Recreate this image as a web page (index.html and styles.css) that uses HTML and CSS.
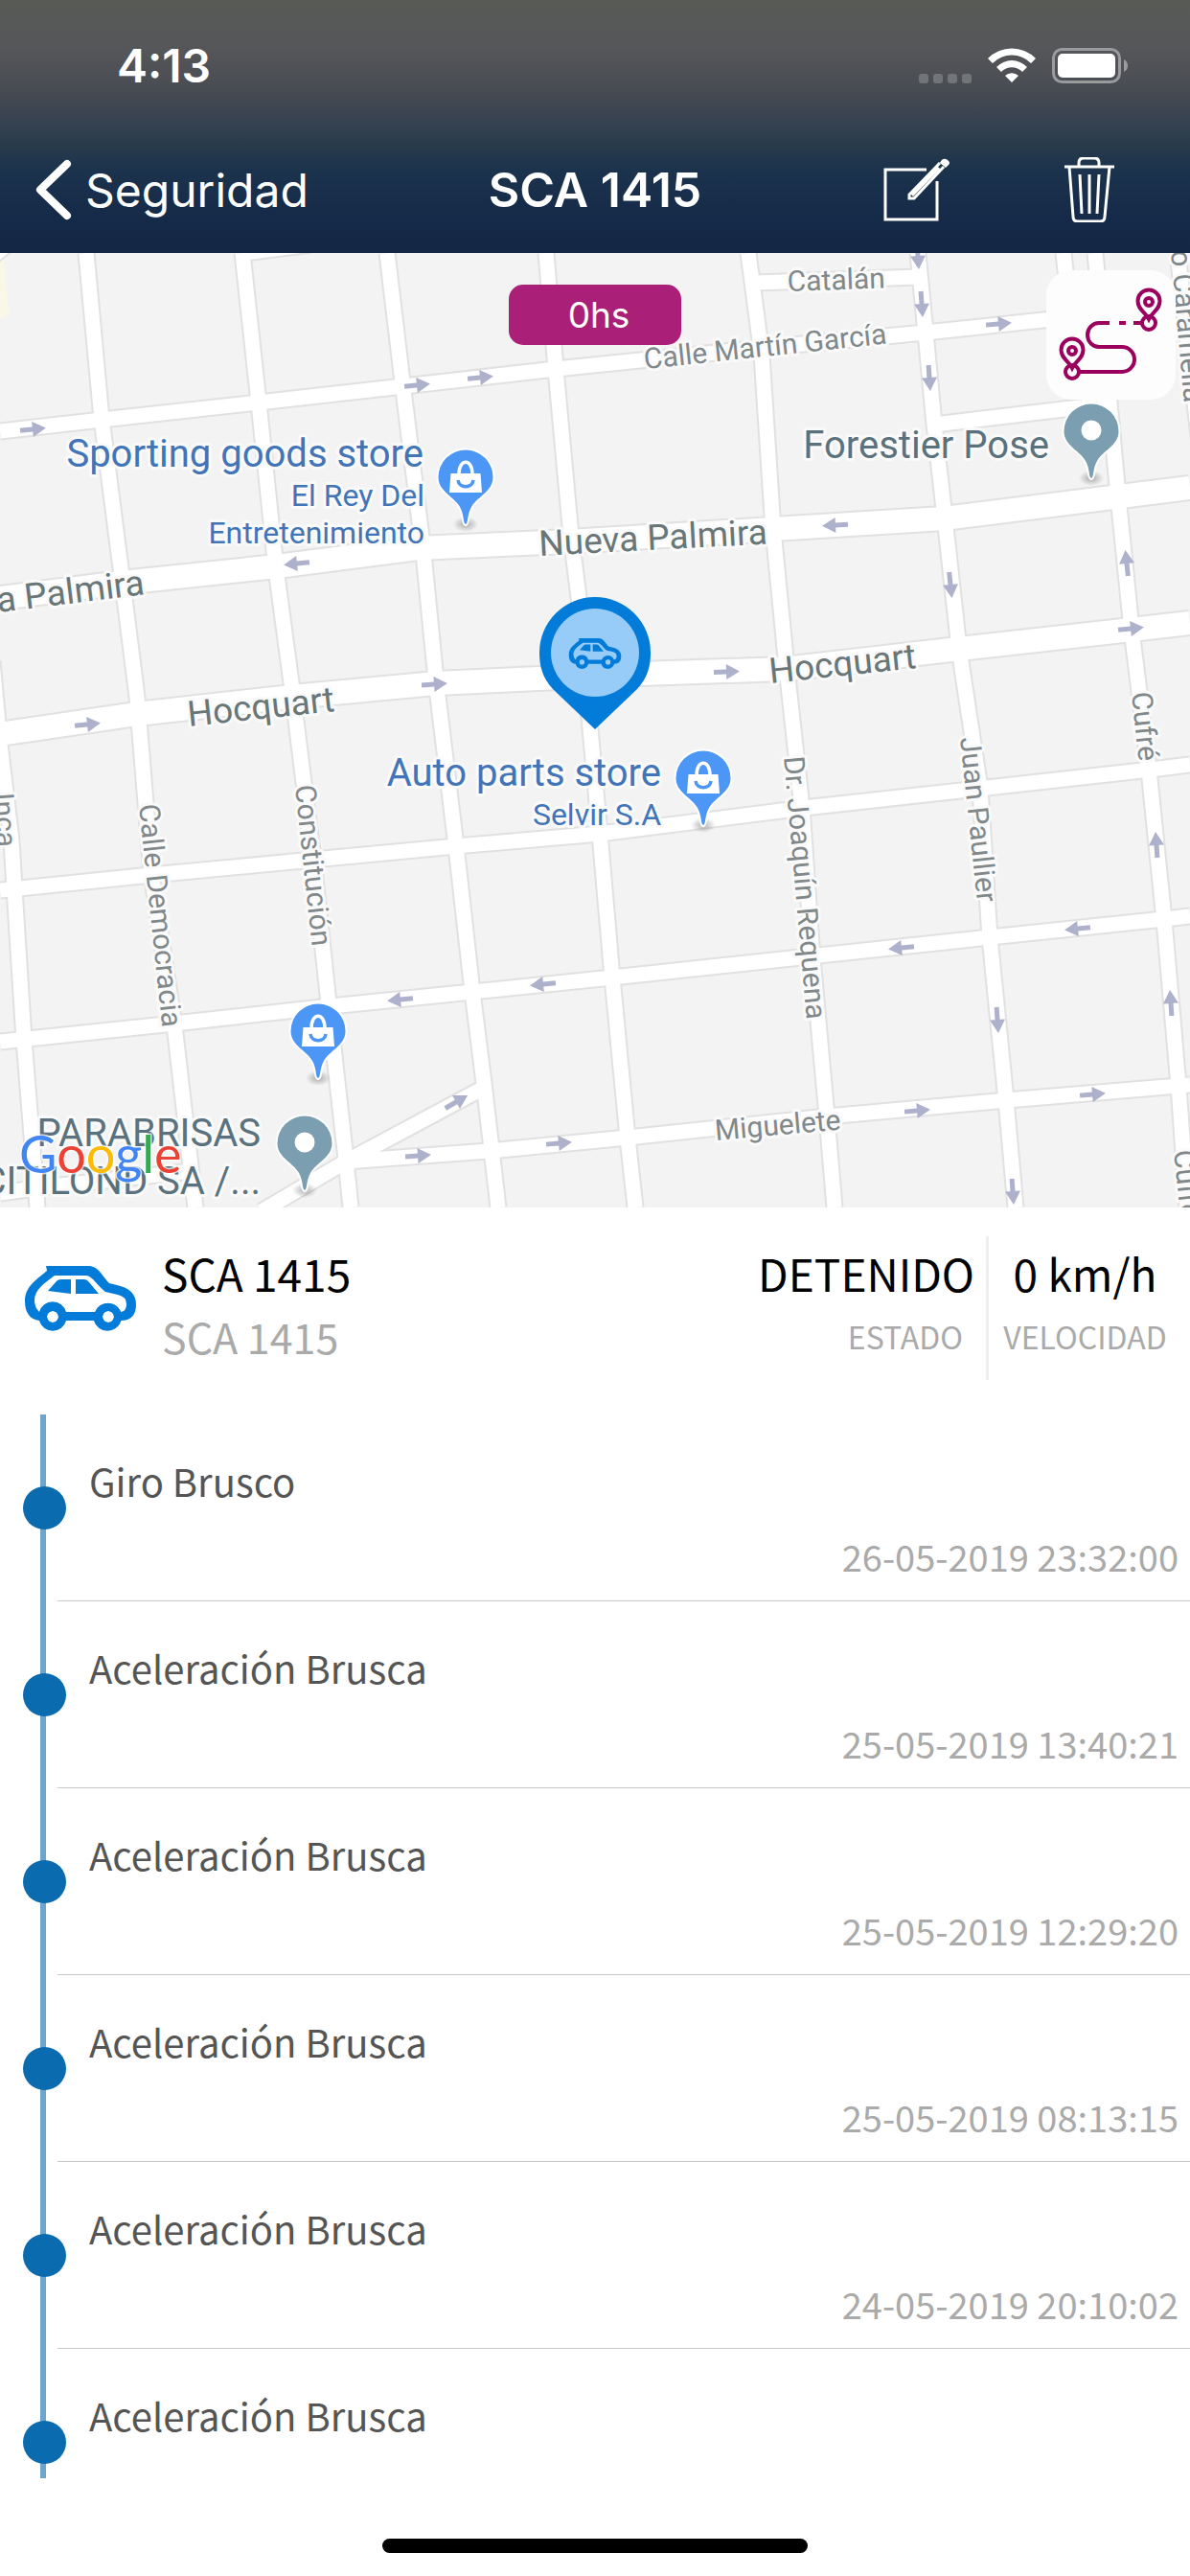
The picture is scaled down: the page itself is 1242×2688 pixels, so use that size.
FILE: index.html
```html
<!DOCTYPE html>
<html lang="es">
<head>
  <meta charset="UTF-8" />
  <meta name="viewport" content="width=device-width, initial-scale=1" />
  <title>SCA 1415</title>
  <link rel="stylesheet" href="styles.css">
</head>
<body>

<header class="top-bar">
  <div class="status-bar">
    <span class="clock">4:13</span>
    <div class="status-icons">
      <span class="signal"><i></i><i></i><i></i><i></i></span>
      <svg class="wifi" viewBox="0 0 50 37" aria-hidden="true">
        <path d="M0 11A35 35 0 0 1 50 11L45 16A28 28 0 0 0 5 16Z" />
        <path d="M9 20A22 22 0 0 1 41 20L36 25A15 15 0 0 0 14 25Z" />
        <path d="M18 29A10 10 0 0 1 32 29L25 36Z" />
      </svg>
      <svg class="battery" viewBox="0 0 80 37" aria-hidden="true">
        <rect x="1.5" y="1.5" width="69" height="34" rx="9" fill="none" stroke="#9a9b9d" stroke-width="3" />
        <rect x="6" y="6" width="60" height="25" rx="5" fill="#fff" />
        <path d="M75 12Q79 14 79 18.5T75 25Z" fill="#9a9b9d" />
      </svg>
    </div>
  </div>

  <nav class="nav-bar">
    <a class="back" href="#">
      <svg viewBox="0 0 38 64" aria-hidden="true"><path d="M33 5L5 32L33 59" /></svg>
      Seguridad
    </a>
    <h1>SCA 1415</h1>
    <div class="actions">
      <button class="icon-button" aria-label="Editar">
        <svg viewBox="0 0 70 68" aria-hidden="true">
          <path d="M45 13H2V65H56V25" />
          <path d="M59 6L27 39V43H32L63 10M55 11L60 15M30 40L58 11" />
          <path class="solid" d="M60 4Q63 0 67 3T67 9L65 11L59 6Z" />
        </svg>
      </button>
      <button class="icon-button" aria-label="Eliminar">
        <svg viewBox="0 0 52 68" aria-hidden="true">
          <path d="M0 10H52M15 9V6Q15 1 20 1H31Q36 1 36 6V9M5 10L9 62Q9 67 14 67H37Q42 67 42 62L47 10M16 18L18 59M26 18V59M36 18L34 59" />
        </svg>
      </button>
    </div>
  </nav>
</header>

<main class="content">
  <section class="map" aria-label="Mapa">
    <svg class="map-canvas" viewBox="0 0 1242 996">
      <defs>
        <g id="roads">
          <path d="M-6 2L8 -9M255 0L325 -9" />
          <path d="M-8 426L0 513L12 613L15 663L25 821L39 996" />
          <path d="M90 0L106 173L126 329L143 463L158 648L182 806L204 996" />
          <path d="M253 0L270 156L288 329L305 456L327 633L343 783L361 946L366 996" />
          <path d="M404 0L421 143L442 313L455 446L476 619L493 771L505 866L520 996" />
          <path d="M570 0L580 121L596 296L604 359L616 496L626 606L639 756L655 923L663 996" />
          <path d="M781 0L795 106L807 289L821 433L837 579L848 736L863 901L871 996" />
          <path d="M958 0L966 83L975 179L986 276L1001 413L1023 559L1033 714L1050 884L1060 996" />
          <path d="M1110 0L1117 66M1143 0L1158 156L1167 254L1181 393L1199 539L1215 696L1230 869L1239 996" />
          <path d="M1229 0L1252 200" />
          <path d="M789 31L958 25" />
          <path d="M0 186L106 174L270 156L421 139L580 121L795 99L966 83L1154 63" />
          <path d="M975 179L1161 157" />
          <path d="M0 665L158 649L327 633L476 619L626 606L839 579L1021 559L1201 539L1242 534" />
          <path d="M0 823L182 804L345 786L493 771L639 756L845 734L1033 714L1215 695L1242 692" />
          <path d="M361 948L511 937L655 923L863 901L1051 884L1230 869L1242 868" />
          <path d="M0 981L36 976L200 958" />
          <path d="M503 872L361 948L273 1000" />
        </g>
        <g id="avenues">
          <path d="M0 360L127 344L289 327L436 308L594 301L807 288L985 277L1169 254L1242 245" />
          <path d="M0 502L143 481L305 463L455 449L562 444L669 439L819 434L1001 413L1181 393L1242 386" />
        </g>
        <path id="arrow" d="M-13 -2.500H0V-8L14 0L0 8V2.500H-13Z" />
        <path id="pin" d="M0 0C-3 -1 -1 -9 -6 -18C-12 -29 -28.5 -34 -28.5 -49A28.5 28.5 0 0 1 28.5 -49C28.5 -34 12 -29 6 -18C1 -9 3 -1 0 0Z" />
        <radialGradient id="shade">
          <stop offset="0" stop-color="#000" stop-opacity=".3" />
          <stop offset="1" stop-color="#000" stop-opacity="0" />
        </radialGradient>
        <g id="shop">
          <ellipse cx="0" cy="0" rx="13" ry="8" fill="url(#shade)" />
          <use href="#pin" class="pin-blue" />
          <path fill="#fff" d="M-15.5 -53H15.5L17 -33H-17Z" />
          <path fill="none" stroke="#fff" stroke-width="3.5" d="M-7 -52C-7 -69 7 -69 7 -52" />
          <path fill="none" stroke="#4c97f5" stroke-width="3.5" d="M-8 -46C-7 -37 7 -37 8 -46" />
        </g>
        <g id="place">
          <ellipse cx="0" cy="0" rx="13" ry="8" fill="url(#shade)" />
          <use href="#pin" class="pin-grey" />
          <circle cx="0" cy="-50" r="10.5" fill="#fff" />
        </g>
        <symbol id="car" viewBox="0 0 116 68">
          <path fill="#037bd8" fill-rule="evenodd" d="M22 0H66C77 0 80 10 88 18L96 20C109 23 116 29 116 40C116 50 112 57 100 57A14.5 14.5 0 0 1 72 57H43A14.5 14.5 0 0 1 15 57C5 56 0 48 0 37C0 22 10 16 23 5ZM31 10C20 18 10 25 10 36Q10 43 15 48A14.5 14.5 0 0 1 43 48H73A14.5 14.5 0 0 1 100 48Q106 47 106 40Q106 32 97 30L84 27C77 22 70 10 64 10ZM23 53A6 6 0 0 0 35 53A6 6 0 0 0 23 53ZM81 53A6 6 0 0 0 93 53A6 6 0 0 0 81 53Z" />
          <path fill="#037bd8" d="M24 26L32 17Q34 14 38 14H48V29ZM53 14H62Q65 14 67 17L77 29H53Z" />
          <circle cx="29" cy="53" r="10" fill="none" stroke="#037bd8" stroke-width="8" />
          <circle cx="87" cy="53" r="10" fill="none" stroke="#037bd8" stroke-width="8" />
        </symbol>
      </defs>

      <rect width="1242" height="996" fill="#f3f3f3" />
      <path fill="#fbf7e6" d="M0 6L4 8L9 64L0 69Z" />

      <!-- road edges first, then the white surface over them -->
      <use href="#roads" class="edge" />
      <use href="#avenues" class="edge wide" />
      <use href="#roads" class="road" />
      <use href="#avenues" class="road wide" />

      <g fill="#adb1cc">
        <use href="#arrow" transform="translate(34 184) rotate(-6)" />
        <use href="#arrow" transform="translate(435 138) rotate(-6)" />
        <use href="#arrow" transform="translate(501 130) rotate(-6)" />
        <use href="#arrow" transform="translate(310 324) rotate(174)" />
        <use href="#arrow" transform="translate(453 450) rotate(-4)" />
        <use href="#arrow" transform="translate(91 492) rotate(-6)" />
        <use href="#arrow" transform="translate(958 3) rotate(86)" />
        <use href="#arrow" transform="translate(962 53) rotate(86)" />
        <use href="#arrow" transform="translate(1042 74) rotate(-5)" />
        <use href="#arrow" transform="translate(970 130) rotate(86)" />
        <use href="#arrow" transform="translate(872 284) rotate(177)" />
        <use href="#arrow" transform="translate(992 346) rotate(84)" />
        <use href="#arrow" transform="translate(1176 324) rotate(-96)" />
        <use href="#arrow" transform="translate(758 437) rotate(-2)" />
        <use href="#arrow" transform="translate(1180 392) rotate(-6)" />
        <use href="#arrow" transform="translate(418 779) rotate(174)" />
        <use href="#arrow" transform="translate(567 763) rotate(174)" />
        <use href="#arrow" transform="translate(476 886) rotate(-30)" />
        <use href="#arrow" transform="translate(436 942) rotate(-4)" />
        <use href="#arrow" transform="translate(583 929) rotate(-5)" />
        <use href="#arrow" transform="translate(1207 618) rotate(-94)" />
        <use href="#arrow" transform="translate(1125 705) rotate(174)" />
        <use href="#arrow" transform="translate(941 725) rotate(174)" />
        <use href="#arrow" transform="translate(1041 800) rotate(86)" />
        <use href="#arrow" transform="translate(1222 783) rotate(-94)" />
        <use href="#arrow" transform="translate(957 895) rotate(-5)" />
        <use href="#arrow" transform="translate(1140 878) rotate(-5)" />
        <use href="#arrow" transform="translate(1057 979) rotate(86)" />
      </g>

      <g class="label street">
        <text transform="translate(822 40) rotate(-2)">Catalán</text>
        <text transform="translate(673 121) rotate(-6)">Calle Martín García</text>
        <text transform="translate(747 926) rotate(-5)">Miguelete</text>
        <text transform="translate(308 556) rotate(84)">Constitución</text>
        <text transform="translate(145 576) rotate(84)">Calle Democracia</text>
        <text transform="translate(-7 564) rotate(86)">Inca</text>
        <text transform="translate(818 526) rotate(85)">Dr. Joaquín Requena</text>
        <text transform="translate(1002 506) rotate(84)">Juan Paullier</text>
        <text transform="translate(1181 459) rotate(84)">Cufré</text>
        <text transform="translate(1225 937) rotate(84)">Cufré</text>
        <text transform="translate(1222 -2) rotate(85)">o Caramella</text>
      </g>
      <g class="label avenue">
        <text transform="translate(563 316) rotate(-3)">Nueva Palmira</text>
        <text transform="translate(-2 375) rotate(-7)">a Palmira</text>
        <text transform="translate(197 494) rotate(-6)">Hocquart</text>
        <text transform="translate(804 449) rotate(-6)">Hocquart</text>
      </g>
      <g class="label shop-name">
        <text x="442" y="223">Sporting goods store</text>
        <text x="690" y="556">Auto parts store</text>
        <text class="small" x="443" y="264">El Rey Del</text>
        <text class="small" x="443" y="303">Entretenimiento</text>
        <text class="small" x="690" y="597">Selvir S.A</text>
      </g>
      <g class="label place-name">
        <text x="1095" y="214">Forestier Pose</text>
        <text x="272" y="932">PARABRISAS</text>
        <text x="272" y="982">CITILOND SA /...</text>
      </g>

      <use href="#shop" x="486" y="283" />
      <use href="#shop" x="734" y="597" />
      <use href="#shop" x="332" y="861" />
      <use href="#place" x="1139" y="235" />
      <use href="#place" x="318" y="978" />

      <path fill="#037bd8" d="M621 497L577 455C566 443 563 431 563 417A58 58 0 0 1 679 417C679 431 676 443 665 455Z" />
      <circle cx="621" cy="417" r="46" fill="#97ccf8" />
      <use href="#car" x="593" y="402" width="56" height="32" />

      <text class="google" x="20" y="960"><tspan fill="#4285f4">G</tspan><tspan fill="#ea4335">o</tspan><tspan fill="#fbbc05">o</tspan><tspan fill="#4285f4">g</tspan><tspan fill="#34a853">l</tspan><tspan fill="#ea4335">e</tspan></text>
    </svg>

    <span class="time-badge">0hs</span>
    <button class="route-button" aria-label="Ver recorrido">
      <svg viewBox="0 0 135 135" aria-hidden="true">
        <path d="M99 55H91M83 55H76M66 55H55A12 12.5 0 0 0 55 80H79A13 13 0 0 1 79 106H35" />
        <circle cx="107" cy="55" r="7" />
        <circle cx="107" cy="33" r="4" />
        <path d="M107 51C103 43 95.5 41 95.5 32A11.5 11.5 0 0 1 118.5 32C118.5 41 111 43 107 51Z" />
        <circle cx="27" cy="106" r="7" />
        <circle cx="27" cy="84" r="4" />
        <path d="M27 102C23 94 15.5 92 15.5 83A11.5 11.5 0 0 1 38.5 83C38.5 92 31 94 27 102Z" />
      </svg>
    </button>
  </section>

  <section class="vehicle">
    <svg class="vehicle-icon" viewBox="0 0 116 68" aria-hidden="true"><use href="#car" width="116" height="68" /></svg>
    <div class="vehicle-name">
      <h2>SCA 1415</h2>
      <p>SCA 1415</p>
    </div>
    <div class="stat state">
      <strong>DETENIDO</strong>
      <span>ESTADO</span>
    </div>
    <div class="stat speed">
      <strong>0 km/h</strong>
      <span>VELOCIDAD</span>
    </div>
  </section>

  <ul class="events">
    <li><h3>Giro Brusco</h3><time>26-05-2019 23:32:00</time></li>
    <li><h3>Aceleración Brusca</h3><time>25-05-2019 13:40:21</time></li>
    <li><h3>Aceleración Brusca</h3><time>25-05-2019 12:29:20</time></li>
    <li><h3>Aceleración Brusca</h3><time>25-05-2019 08:13:15</time></li>
    <li><h3>Aceleración Brusca</h3><time>24-05-2019 20:10:02</time></li>
    <li><h3>Aceleración Brusca</h3></li>
  </ul>
</main>

<footer class="home-area"><span class="home-indicator"></span></footer>

</body>
</html>
```

FILE: styles.css
```css
* {
  box-sizing: border-box;
}

body {
  margin: 0;
  height: 100vh;
  display: flex;
  flex-direction: column;
  background: #fff;
  font-family: "Noto Sans CJK SC", "Open Sans", sans-serif;
}

h1, h2, h3, p, ul {
  margin: 0;
  padding: 0;
  font-weight: 400;
}

button {
  border: 0;
  padding: 0;
  background: none;
  cursor: pointer;
}

/* top bar */
.top-bar {
  flex: none;
  color: #fff;
  font-family: Inter, Roboto, sans-serif;
  background: linear-gradient(#585a56 0, #555659 52px, #4a4d53 88px, #374350 124px, #283b4b 152px, #1c334d 176px, #152b49 222px, #142745 264px);
}

.status-bar {
  height: 132px;
  padding: 4px 64px 0 122px;
  display: flex;
  align-items: center;
  justify-content: space-between;
}

.clock {
  font-size: 48px;
  font-weight: 600;
}

.status-icons {
  display: flex;
  align-items: flex-end;
  gap: 17px;
}

.signal {
  display: flex;
  gap: 5px;
}

.signal i {
  width: 10px;
  height: 10px;
  border-radius: 3px;
  background: #727478;
}

.wifi {
  width: 50px;
  height: 37px;
  fill: #fff;
}

.battery {
  width: 80px;
  height: 37px;
}

.nav-bar {
  height: 132px;
  padding: 0 37px;
  display: grid;
  grid-template-columns: 1fr auto 1fr;
  align-items: center;
}

.back {
  display: flex;
  align-items: center;
  gap: 14px;
  color: #fff;
  font-size: 48px;
  text-decoration: none;
}

.back svg {
  width: 38px;
  height: 64px;
  fill: none;
  stroke: #fff;
  stroke-width: 8;
  stroke-linecap: round;
  stroke-linejoin: round;
}

.nav-bar h1 {
  font-size: 50px;
  font-weight: 600;
}

.actions {
  display: flex;
  justify-content: flex-end;
  gap: 119px;
  padding-right: 42px;
}

.icon-button svg {
  display: block;
  height: 68px;
  fill: none;
  stroke: #fff;
  stroke-width: 3;
}

.icon-button .solid {
  fill: #fff;
  stroke: none;
}

/* map */
.content {
  flex: 1;
  min-height: 0;
  display: flex;
  flex-direction: column;
}

.map {
  position: relative;
  flex: none;
}

.map-canvas {
  display: block;
  width: 100%;
  height: auto;
}

.edge,
.road {
  fill: none;
  stroke: #e1e1e1;
  stroke-width: 19;
}

.edge.wide {
  stroke-width: 28;
}

.road {
  stroke: #fff;
  stroke-width: 15;
}

.road.wide {
  stroke-width: 24;
}

.label {
  font-family: Roboto, Inter, sans-serif;
  paint-order: stroke;
  stroke: #fafafa;
  stroke-width: 6px;
  stroke-linejoin: round;
}

.street {
  fill: #80888a;
  font-size: 30px;
}

.avenue {
  fill: #687678;
  font-size: 37px;
}

.shop-name {
  fill: #4175b7;
  font-size: 40px;
  text-anchor: end;
}

.shop-name .small {
  font-size: 32px;
}

.place-name {
  fill: #5a727e;
  font-size: 40px;
  text-anchor: end;
}

.pin-blue,
.pin-grey {
  fill: #4c97f5;
  paint-order: stroke;
  stroke: #fff;
  stroke-width: 4px;
}

.pin-grey {
  fill: #7c9eb1;
}

.google {
  font-family: Lato, sans-serif;
  font-size: 54px;
  font-weight: 400;
  paint-order: stroke;
  stroke: #fff;
  stroke-opacity: .7;
  stroke-width: 3px;
}

.time-badge {
  position: absolute;
  top: 33px;
  left: 50%;
  transform: translateX(-50%);
  width: 180px;
  padding-left: 8px;
  border-radius: 15px;
  background: #aa1f78;
  color: #fff;
  font-family: Inter, Roboto, sans-serif;
  font-size: 37px;
  line-height: 63px;
  text-align: center;
}

.route-button {
  position: absolute;
  top: 18px;
  right: 15px;
  width: 135px;
  height: 135px;
  border-radius: 26px;
  background: #fdfdfd;
}

.route-button svg {
  display: block;
  fill: none;
  stroke: #9b005f;
  stroke-width: 4;
}

/* vehicle summary */
.vehicle {
  flex: none;
  height: 216px;
  padding: 30px 9px 36px 26px;
  display: flex;
}

.vehicle-icon {
  width: 116px;
  height: 68px;
  margin-top: 31px;
}

.vehicle-name {
  flex: 1;
  padding: 8px 0 0 27px;
  line-height: 60px;
}

.vehicle-name h2 {
  margin-bottom: 6px;
  font-size: 46px;
}

.vehicle-name p {
  color: #aaa;
  font-size: 43px;
}

.stat {
  display: flex;
  flex-direction: column;
  gap: 6px;
  padding-top: 8px;
  line-height: 60px;
}

.stat strong {
  font-size: 46px;
  font-weight: 400;
}

.stat span {
  color: #aaa;
  font-size: 32px;
}

.state {
  padding-right: 12px;
  text-align: right;
  border-right: 3px solid #eeeef2;
}

.state span {
  padding-right: 12px;
}

.speed {
  width: 201px;
  text-align: center;
}

/* events timeline */
.events {
  position: relative;
  flex: 1;
  min-height: 0;
  overflow: hidden;
  list-style: none;
}

.events::before {
  content: "";
  position: absolute;
  top: 0;
  bottom: 0;
  left: 42px;
  width: 6px;
  background: #6da5cd;
}

.events li {
  position: relative;
  height: 195px;
  margin-left: 60px;
  padding: 39px 12px 0 33px;
  border-bottom: 1px solid #c8c8cc;
  line-height: 60px;
}

.events li::before {
  content: "";
  position: absolute;
  top: 75px;
  left: -36px;
  width: 45px;
  height: 45px;
  border-radius: 50%;
  background: #0a6bae;
}

.events h3 {
  margin-bottom: 19px;
  color: #555;
  font-size: 40px;
}

.events time {
  display: block;
  color: #aaa;
  font-size: 38px;
  text-align: right;
}

.home-area {
  flex: none;
  height: 102px;
  padding-top: 63px;
}

.home-indicator {
  display: block;
  width: 444px;
  height: 15px;
  margin: 0 auto;
  border-radius: 8px;
  background: #000;
}
```
